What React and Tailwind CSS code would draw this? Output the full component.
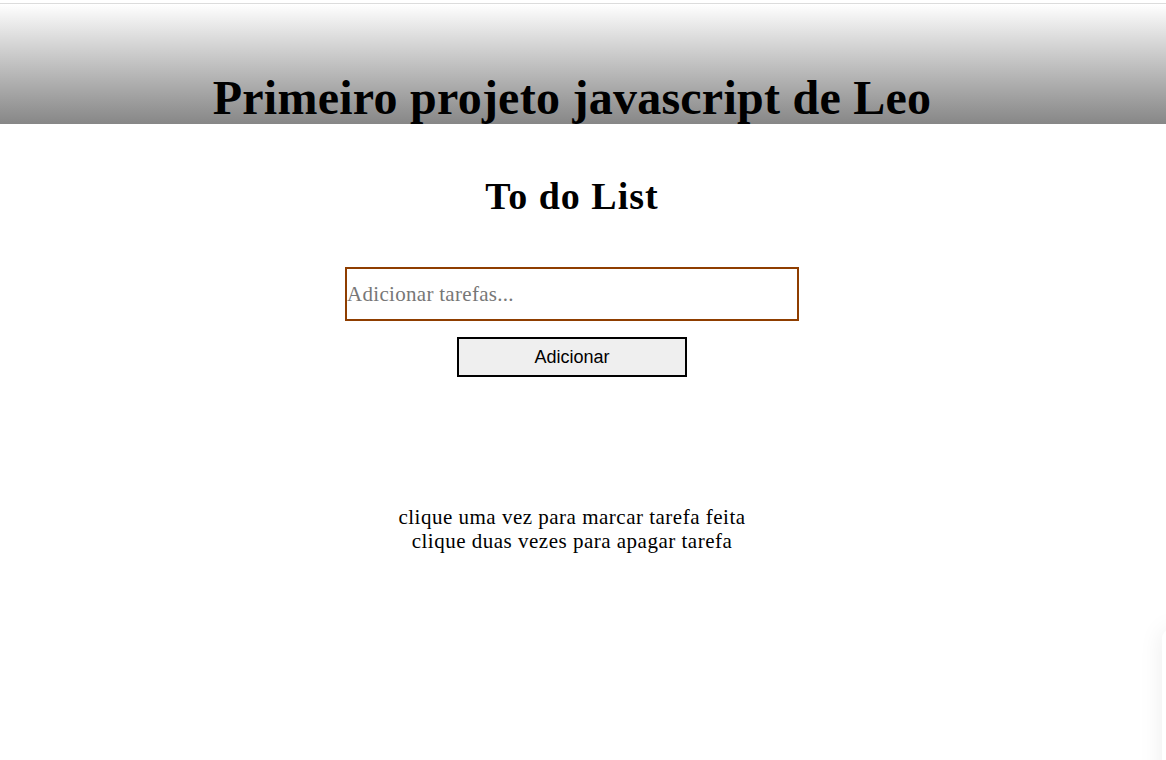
import React, { useState } from 'react';

const serif = "font-['Liberation_Serif',serif]";

const App = () => {
  const [task, setTask] = useState('');

  return (
    <div className={`relative min-h-[760px] w-full bg-white text-black overflow-hidden ${serif}`}>
      {/* Header */}
      <div className="mt-[3px] border-t border-[#dcdcdc] h-[121px] bg-gradient-to-b from-white to-[#878787]">
        <div className="w-[1144px] h-full flex items-end justify-center overflow-hidden">
          <h1 className="text-[48px] leading-none font-bold tracking-[0.25px] pb-[2px]">
            Primeiro projeto javascript de Leo
          </h1>
        </div>
      </div>

      {/* Main */}
      <div className="w-[1144px] flex flex-col items-center">
        <h2 className="mt-[53px] text-[38px] leading-none font-bold tracking-[1px]">To do List</h2>

        <input
          value={task}
          onChange={(e) => setTask(e.target.value)}
          placeholder="Adicionar tarefas..."
          className="mt-[52px] w-[454px] h-[54px] border-2 border-[#8f3e00] px-0 text-[21px] tracking-[0.3px] text-black placeholder:text-[#777] outline-none"
        />

        <button className="mt-[16px] w-[230px] h-[40px] border-2 border-black bg-[#efefef] text-[18px] font-['Liberation_Sans',Arial,sans-serif]">
          Adicionar
        </button>

        <div className="mt-[128px] text-center text-[21px] leading-[24px] tracking-[0.5px]">
          <p>clique uma vez para marcar tarefa feita</p>
          <p>clique duas vezes para apagar tarefa</p>
        </div>
      </div>

      {/* faint floating shadow at the right edge */}
      <div className="absolute right-[-20px] top-[630px] w-[24px] h-[160px] rounded-l-lg bg-white shadow-[0_0_24px_rgba(0,0,0,0.08)]" />
    </div>
  );
};

export default App;
